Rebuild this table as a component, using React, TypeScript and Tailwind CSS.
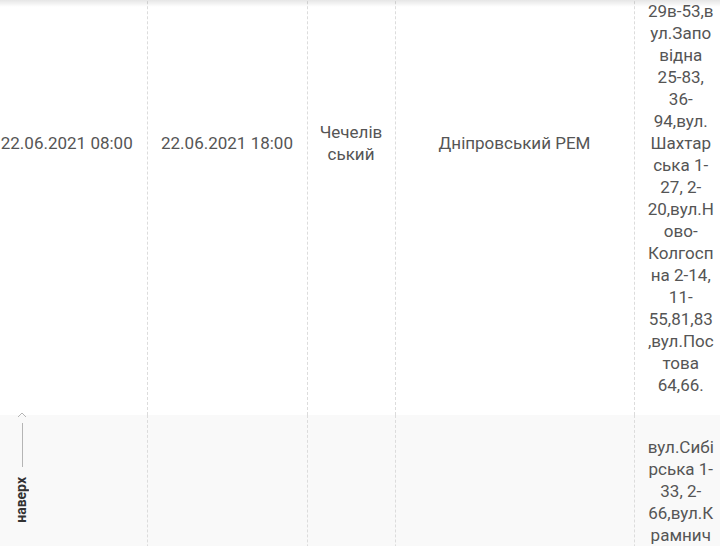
const addrRow1 = [
  "вул.Бере",
  "гова 1-",
  "17, 2-",
  "14,вул.Р",
  "учна 1-",
  "29в-53,в",
  "ул.Запо",
  "відна",
  "25-83,",
  "36-",
  "94,вул.",
  "Шахтар",
  "ська 1-",
  "27, 2-",
  "20,вул.Н",
  "ово-",
  "Колгосп",
  "на 2-14,",
  "11-",
  "55,81,83",
  ",вул.Пос",
  "това",
  "64,66.",
];

const addrRow2 = [
  "вул.Сибі",
  "рська 1-",
  "33, 2-",
  "66,вул.К",
  "рамнич",
  "на 1-11,",
  "2-16,вул.",
  "Дачна",
  "1-21, 2-",
  "30,вул.Л",
  "ісова 3-",
  "19, 4-",
  "22,вул.С",
  "адова 1-",
  "9, 2-14,",
  "вул.Тих",
  "а 1-7.",
];

function Lines({ lines }: { lines: string[] }) {
  return (
    <>
      {lines.map((line, i) => (
        <span key={i} className="block whitespace-nowrap">
          {line}
        </span>
      ))}
    </>
  );
}

const cell = "border-r border-dashed border-[#dcdcdc] px-3 text-center align-middle";

export default function App() {
  return (
    <div
      className="relative h-[546px] w-[720px] overflow-hidden bg-white text-[17px] leading-[22px] text-[#555]"
      style={{ fontFamily: "Roboto, 'Liberation Sans', sans-serif" }}
    >
      <table className="-ml-[13px] -mt-[129px] w-[740px] table-fixed border-collapse">
        <colgroup>
          <col className="w-[160px]" />
          <col className="w-[160px]" />
          <col className="w-[88px]" />
          <col className="w-[239px]" />
          <col className="w-[93px]" />
        </colgroup>
        <tbody>
          <tr className="bg-white">
            <td className={`${cell} py-[19px]`}>22.06.2021 08:00</td>
            <td className={`${cell} py-[19px]`}>22.06.2021 18:00</td>
            <td className={`${cell} py-[19px]`}>
              <Lines lines={["Чечелів", "ський"]} />
            </td>
            <td className={`${cell} py-[19px]`}>Дніпровський РЕМ</td>
            <td className="px-3 py-[19px] text-center align-middle">
              <Lines lines={addrRow1} />
            </td>
          </tr>
          <tr className="bg-[#f9f9f9]">
            <td className={`${cell} py-[21px]`}>22.06.2021 08:00</td>
            <td className={`${cell} py-[21px]`}>22.06.2021 18:00</td>
            <td className={`${cell} py-[21px]`}>
              <Lines lines={["Чечелів", "ський"]} />
            </td>
            <td className={`${cell} py-[21px]`}>Дніпровський РЕМ</td>
            <td className="px-3 py-[21px] text-center align-middle">
              <Lines lines={addrRow2} />
            </td>
          </tr>
        </tbody>
      </table>

      {/* shadow from the sticky header above */}
      <div className="absolute left-0 right-0 top-0 h-[7px] bg-gradient-to-b from-black/10 to-transparent" />

      {/* back to top */}
      <a href="#" className="absolute left-[14px] top-[411px] flex w-[16px] flex-col items-center">
        <svg width="10" height="7" viewBox="0 0 10 7" fill="none" stroke="#b5b5b5" strokeWidth="1">
          <polyline points="1,6 5,2 9,6" />
        </svg>
        <span className="mt-[5px] h-[44px] w-px bg-[#b5b5b5]" />
        <span className="-ml-[3px] mt-[10px] rotate-180 text-[14px] font-bold leading-[16px] text-[#333] [writing-mode:vertical-rl]">
          наверх
        </span>
      </a>
    </div>
  );
}
